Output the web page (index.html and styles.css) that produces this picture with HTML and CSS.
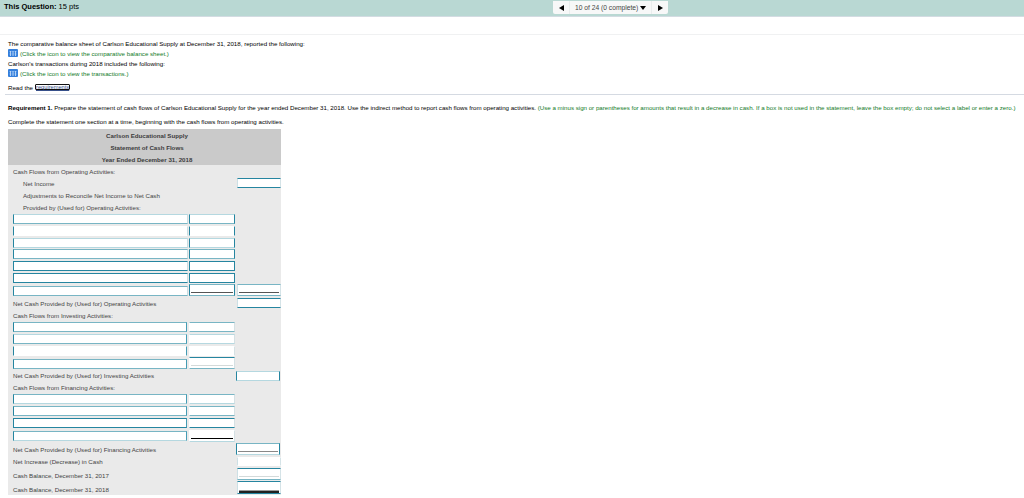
FILE: index.html
```html
<!DOCTYPE html>
<html lang="en">
<head>
  <meta charset="UTF-8">
  <title>This Question: 15 pts</title>
  <link rel="stylesheet" href="styles.css">
</head>
<body>
  <header class="topbar">
    <div class="points"><b>This Question:</b> <span>15 pts</span></div>
    <div class="pager">
      <span class="pager-prev"><svg width="5" height="6" viewBox="0 0 5 6"><path d="M5 0v6L0 3z"/></svg></span>
      <span class="pager-label">10 of 24 (0 complete)<svg width="6" height="4" viewBox="0 0 6 4"><path d="M0 0h6L3 4z"/></svg></span>
      <span class="pager-next"><svg width="5" height="6" viewBox="0 0 5 6"><path d="M0 0v6l5-3z"/></svg></span>
    </div>
  </header>
  <div class="spacer"></div>

  <section class="intro">
    <p>The comparative balance sheet of Carlson Educational Supply at December 31, 2018, reported the following:</p>
    <p class="green"><svg class="grid-icon" width="10" height="8" viewBox="0 0 10 8"><rect width="10" height="8" rx="1" fill="#3580dc"/><path d="M1 2.5h8M1 5h8" stroke="#7db2f0" stroke-width=".5"/><path d="M2.5 2v5M5 2v5M7.5 2v5" stroke="#cfe3fa" stroke-width=".8"/></svg>(Click the icon to view the comparative balance sheet.)</p>
    <p>Carlson's transactions during 2018 included the following:</p>
    <p class="green"><svg class="grid-icon" width="10" height="8" viewBox="0 0 10 8"><rect width="10" height="8" rx="1" fill="#3580dc"/><path d="M1 2.5h8M1 5h8" stroke="#7db2f0" stroke-width=".5"/><path d="M2.5 2v5M5 2v5M7.5 2v5" stroke="#cfe3fa" stroke-width=".8"/></svg>(Click the icon to view the transactions.)</p>
    <p class="read">Read the <a class="req">requirements</a></p>
  </section>

  <section class="task">
    <p><b>Requirement 1.</b> Prepare the statement of cash flows of Carlson Educational Supply for the year ended December 31, 2018. Use the indirect method to report cash flows from operating activities. <span class="green">(Use a minus sign or parentheses for amounts that result in a decrease in cash. If a box is not used in the statement, leave the box empty; do not select a label or enter a zero.)</span></p>
    <p class="sub">Complete the statement one section at a time, beginning with the cash flows from operating activities.</p>
  </section>

  <main class="sheet">
    <div class="sheet-head">
      <div>Carlson Educational Supply</div>
      <div>Statement of Cash Flows</div>
      <div>Year Ended December 31, 2018</div>
    </div>

    <div class="row"><span class="label">Cash Flows from Operating Activities:</span></div>
    <div class="row"><span class="label indent">Net Income</span><i class="box total"></i></div>
    <div class="row"><span class="label indent">Adjustments to Reconcile Net Income to Net Cash</span></div>
    <div class="row"><span class="label indent">Provided by (Used for) Operating Activities:</span></div>
    <div class="row op"><i class="box account tl bm"></i><i class="box amount tl bm"></i></div>
    <div class="row op"><i class="box account tn bn"></i><i class="box amount tn bn"></i></div>
    <div class="row op short"><i class="box account tl bl"></i><i class="box amount tl bl"></i></div>
    <div class="row op"><i class="box account tm bm"></i><i class="box amount tm bm"></i></div>
    <div class="row op"><i class="box account"></i><i class="box amount"></i></div>
    <div class="row op short"><i class="box account"></i><i class="box amount"></i></div>
    <div class="row op last"><i class="box account tm bm"></i><i class="box amount tall tm bm line"></i><i class="box total tall tm bm line"></i></div>
    <div class="row net"><span class="label">Net Cash Provided by (Used for) Operating Activities</span><i class="box total"></i></div>

    <div class="row"><span class="label">Cash Flows from Investing Activities:</span></div>
    <div class="row inv"><i class="box account tm bm"></i><i class="box amount tm bm"></i></div>
    <div class="row inv"><i class="box account tl bm"></i><i class="box amount tl bl"></i></div>
    <div class="row inv short"><i class="box account tn bn"></i><i class="box amount tn bn"></i></div>
    <div class="row inv last"><i class="box account tm bm"></i><i class="box amount tall bm line faint"></i></div>
    <div class="row wide-total"><span class="label">Net Cash Provided by (Used for) Investing Activities</span><i class="box total tl bl"></i></div>

    <div class="row"><span class="label">Cash Flows from Financing Activities:</span></div>
    <div class="row inv"><i class="box account tm bl"></i><i class="box amount tm bl"></i></div>
    <div class="row inv"><i class="box account tm bm"></i><i class="box amount tm bm"></i></div>
    <div class="row inv"><i class="box account"></i><i class="box amount"></i></div>
    <div class="row inv last-fin"><i class="box account tm bl"></i><i class="box amount tall tn bl line black"></i></div>
    <div class="row net-fin wide-total"><span class="label">Net Cash Provided by (Used for) Financing Activities</span><i class="box total tall tm bl line gray"></i></div>
    <div class="row increase"><span class="label">Net Increase (Decrease) in Cash</span><i class="box total tn bn"></i></div>
    <div class="row balance"><span class="label">Cash Balance, December 31, 2017</span><i class="box total tall bm line faint"></i></div>
    <div class="row balance end"><span class="label">Cash Balance, December 31, 2018</span><i class="box total tall line double"></i></div>
  </main>
</body>
</html>
```

FILE: styles.css
```css
* {
  box-sizing: border-box;
}
body {
  margin: 0;
  height: 498px;
  overflow: hidden;
  background: #fff;
  color: #000;
  font-family: "Liberation Sans", Arial, sans-serif;
  font-size: 6.17px;
  white-space: nowrap;
}
p {
  margin: 0;
}
.topbar {
  display: flex;
  height: 17px;
  background: #b9d8d3;
  border-bottom: 1px solid #d3dce2;
}
.points {
  width: 553px;
  padding-left: 4px;
  font-size: 7.5px;
  line-height: 14px;
}
.pager {
  display: flex;
  width: 115px;
  height: 13px;
  margin-top: 1px;
  background: #f7f8f8;
  border-radius: 0 0 2px 2px;
}
.pager span {
  display: flex;
  align-items: center;
}
.pager-prev,
.pager-next {
  width: 16px;
  justify-content: center;
}
.pager .pager-label {
  width: 83px;
  gap: 2px;
  padding-left: 5px;
  border-left: 1px solid #e9eded;
  border-right: 1px solid #e9eded;
  color: #444;
  font-size: 6.7px;
}
.spacer {
  height: 18px;
  border-bottom: 1px solid #f0f1f2;
}
.green {
  color: #127a28;
}
.intro {
  height: 60px;
  margin-left: 5px;
  padding: 3px 0 0 3px;
  border-bottom: 1px solid #d5dae2;
}
.intro p {
  display: flex;
  align-items: center;
  height: 10px;
}
.grid-icon {
  margin-right: 2px;
}
.intro .read {
  height: 12px;
  margin-top: 3px;
}
.req {
  height: 6px;
  margin-left: 2px;
  border: 1px solid #111;
  border-radius: 1px;
  color: #37508a;
  font-size: 5.7px;
  line-height: 4px;
  text-decoration: underline;
}
.task {
  height: 34px;
  padding: 6px 0 0 8px;
}
.task p {
  height: 14px;
  line-height: 14px;
}
.sheet {
  width: 273px;
  height: 366px;
  margin-left: 8px;
  background: #eaeaea;
  color: #444;
}
.sheet-head {
  height: 36px;
  margin-bottom: 1px;
  padding: 1px 0 0 5px;
  background: #cacaca;
  color: #3c3c3c;
  font-weight: bold;
  line-height: 12px;
  text-align: center;
}
.row {
  display: flex;
  height: 12px;
  padding-left: 5px;
  line-height: 12px;
}
.label {
  width: 224px;
}
.label.indent {
  padding-left: 10px;
}
/* answer boxes */
.box {
  height: 10px;
  background: #fff;
  border: 1px solid #2585a0;
}
.account {
  width: 175px;
}
.op .account {
  border-right-color: #c9dde2;
}
.amount {
  width: 46px;
  margin-left: 1px;
}
.total {
  width: 44px;
  border-left-color: #cde0e5;
  border-right-color: #d5e3e7;
}
.inv .account {
  width: 174px;
  border-right-color: #459cb4;
}
.inv .amount {
  width: 46px;
  margin-left: 2px;
  border-left-color: #fff;
  border-right-color: #d5e1e4;
}
.amount + .total {
  margin-left: 2px;
}
.tm {
  border-top-color: #78b5c4;
}
.tl {
  border-top-color: #b5d8e0;
}
.tn {
  border-top-color: #fff;
}
.bm {
  border-bottom-color: #78b5c4;
}
.bl {
  border-bottom-color: #b5d8e0;
}
.bn {
  border-bottom-color: #fff;
}
.short {
  height: 11px;
}
.last {
  height: 13px;
}
.op.last {
  height: 14px;
}
.last .account {
  margin-top: 2px;
}
.tall {
  height: 12px;
}
.wide-total .label {
  width: 223px;
}
.wide-total .total {
  margin-top: 1px;
  border-left-color: #2585a0;
  border-right-color: #2585a0;
}
.last-fin .account {
  margin-top: 1px;
}
/* subtotal rule under the amount */
.line {
  padding: 7px 1px 0;
}
.line::after {
  content: "";
  display: block;
  height: 1px;
  background: #555;
}
.faint::after {
  background: #d3dada;
}
.black::after {
  background: #000;
}
.gray::after {
  background: #888;
}
.double::after {
  height: 2px;
  border-top: 1px solid #999;
  background: #222;
}
.net-fin {
  height: 14px;
  line-height: 16px;
}
.increase .box {
  height: 9px;
  margin-top: 1px;
}
.balance {
  height: 13px;
  line-height: 15px;
}
.end {
  line-height: 17px;
}
.end .tall {
  height: 13px;
  padding-top: 8px;
}
```
